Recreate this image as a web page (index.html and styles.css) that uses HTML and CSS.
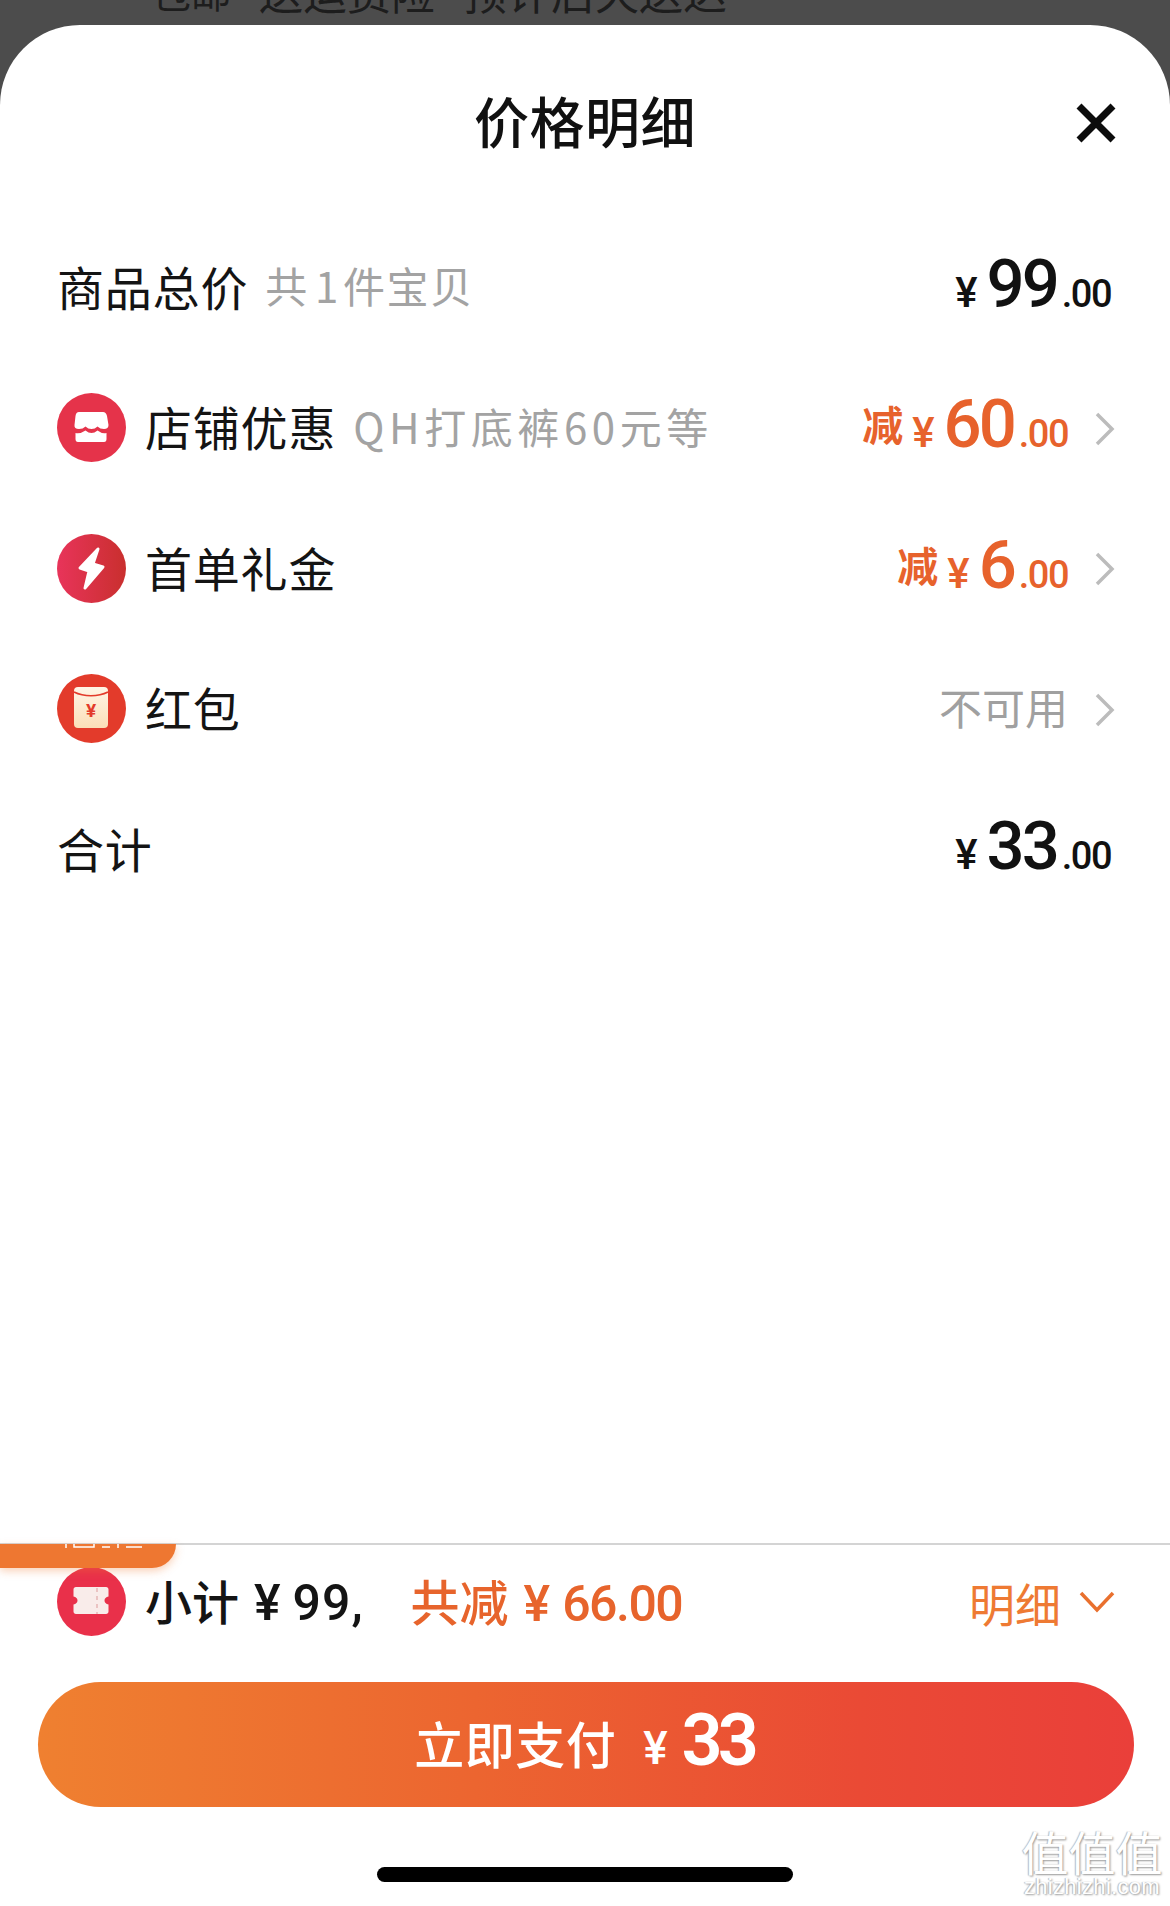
FILE: index.html
```html
<!DOCTYPE html>
<html lang="zh-CN">
<head>
<meta charset="utf-8">
<title>价格明细</title>
<link rel="stylesheet" href="styles.css">
</head>
<body>
<div class="page">
  <div class="behind"><span class="behind-text"><span class="behind-a">包邮</span><span>送运费险</span><span>预计后天送达</span></span></div>
  <main class="sheet">
    <header class="head">
      <span></span>
      <h1 class="title">价格明细</h1>
      <svg class="close" viewBox="0 0 40 40"><path d="M3 3 37 37M37 3 3 37"/></svg>
    </header>
    <section class="rows">
      <div class="row row-plain">
        <div class="left"><span class="label">商品总价</span><span class="sub sub-first">共<span class="num-gap">1</span>件宝贝</span></div>
        <div class="price"><span class="yen">¥</span><span class="big">99</span><span class="small">.00</span></div>
      </div>
      <div class="row">
        <div class="left">
          <svg class="icon" viewBox="0 0 69 69"><circle cx="34.5" cy="34.5" r="34.5" fill="#e5334a"/><path fill="#fff" d="M22 19H46Q49 19 50 23L51.500 32Q51.500 36 47 36 43 36 40.500 33.500 38 36 34.500 36 31 36 28.500 33.500 26 36 22 36 17 36 17.500 32L18.500 23Q19 19 22 19ZM18.500 40Q23.500 41 28.500 37.500 31.500 40 34.500 40 37.500 40 40.500 37.500 45 41 49.500 40V46Q49.500 49 47 49H21Q18.500 49 18.500 46Z"/></svg>
          <span class="label">店铺优惠</span><span class="sub sub-wide">QH打底裤60元等</span>
        </div>
        <div class="right">
          <div class="price off"><span class="minus">减</span><span class="yen">¥</span><span class="big">60</span><span class="small">.00</span></div>
          <svg class="chev" viewBox="0 0 20 34"><path d="M2 2 17 17 2 32"/></svg>
        </div>
      </div>
      <div class="row">
        <div class="left">
          <svg class="icon" viewBox="0 0 69 69"><defs><linearGradient id="bolt" x1="0" x2="1" y1="0" y2="0"><stop offset="0" stop-color="#e8345a"/><stop offset="1" stop-color="#c92f2e"/></linearGradient></defs><circle cx="34.500" cy="34.500" r="34.500" fill="url(#bolt)"/><path fill="#fff" stroke="#fff" stroke-width="3" stroke-linejoin="round" d="M41 15 23 34l9 3-4 17 18-21-10-3z"/></svg>
          <span class="label">首单礼金</span>
        </div>
        <div class="right">
          <div class="price off"><span class="minus">减</span><span class="yen">¥</span><span class="big">6</span><span class="small">.00</span></div>
          <svg class="chev" viewBox="0 0 20 34"><path d="M2 2 17 17 2 32"/></svg>
        </div>
      </div>
      <div class="row">
        <div class="left">
          <svg class="icon" viewBox="0 0 69 69"><defs><linearGradient id="pack" x1="0" x2="0" y1="0" y2="1"><stop offset="0" stop-color="#fff5e6"/><stop offset="1" stop-color="#fbdfb8"/></linearGradient></defs><circle cx="34.500" cy="34.500" r="34.500" fill="#e33b2b"/><rect x="17" y="13" width="34" height="41" rx="4" fill="url(#pack)"/><path d="M17 18c10 5 24 5 34 0" fill="none" stroke="#e33b2b" stroke-width="1.600"/><text class="pack-yen" x="34" y="43">¥</text></svg>
          <span class="label">红包</span>
        </div>
        <div class="right">
          <span class="none">不可用</span>
          <svg class="chev" viewBox="0 0 20 34"><path d="M2 2 17 17 2 32"/></svg>
        </div>
      </div>
      <div class="row row-plain">
        <div class="left"><span class="label">合计</span></div>
        <div class="price"><span class="yen">¥</span><span class="big">33</span><span class="small">.00</span></div>
      </div>
    </section>
    <footer class="foot">
      <div class="tab"><svg class="tab-marks" viewBox="0 0 80 5"><path d="M2 0V4M10 0V3H30V0M38 3H46M54 0V4M62 3H78"/></svg></div>
      <div class="summary">
        <div class="left">
          <svg class="icon" viewBox="0 0 69 69"><circle cx="34.500" cy="34.500" r="34.500" fill="#e9304a"/><path fill="#f9ecea" d="M19 20h30c1.500 0 2.500 1 2.500 2.500v7c-2.500.5-4 2-4 4s1.500 3.500 4 4v7c0 1.500-1 2.500-2.500 2.500H19c-1.500 0-2.500-1-2.500-2.500v-7c2.500-.5 4-2 4-4s-1.500-3.500-4-4v-7c0-1.500 1-2.500 2.500-2.500z"/><path d="M40 21V47" stroke="#e8b9b9" stroke-width="1.600" stroke-dasharray="4 4"/></svg>
          <span class="total">小计<span class="total-yen">¥</span><span class="total-num">99,</span></span>
          <span class="saved">共减<span class="total-yen">¥</span><span class="saved-num">66.00</span></span>
        </div>
        <div class="detail">明细<svg class="down" viewBox="0 0 36 24"><path d="M2 3 18 20 34 3"/></svg></div>
      </div>
      <button class="pay"><span class="pay-label">立即支付</span><span class="pay-yen">¥</span><span class="pay-num">33</span></button>
      <div class="home"></div>
    </footer>
  </main>
  <div class="mark"><span class="mark-cn">值值值</span><span class="mark-en">zhizhizhi.com</span></div>
</div>
</body>
</html>
```

FILE: styles.css
```css
* { box-sizing: border-box; }
html, body { margin: 0; padding: 0; }
body { font-family: "Noto Sans CJK SC", "Noto Sans", sans-serif; color: #111; }
.page { position: relative; width: 1170px; height: 1906px; overflow: hidden; background: #4c4c4c; display: flex; flex-direction: column; }

.behind { height: 25px; flex: none; overflow: hidden; padding-left: 151px; }
.behind-text { display: flex; gap: 28px; margin-top: -39px; font-size: 44px; line-height: 60px; color: #1d1d1d; }
.behind-a { font-size: 40px; }

.sheet { flex: 1; display: flex; flex-direction: column; background: #fff; border-radius: 80px 80px 0 0; }

.head { height: 192px; flex: none; display: grid; grid-template-columns: 1fr auto 1fr; align-items: center; padding: 0 54px; }
.title { margin: 0; margin-bottom: 4px; font-size: 55px; font-weight: 500; line-height: 1; letter-spacing: .5px; color: #111; }
.close { width: 40px; height: 40px; justify-self: end; margin-top: 3px; }
.close path { fill: none; stroke: #0c0c0c; stroke-width: 7; }

.row { height: 140.500px; display: flex; align-items: center; justify-content: space-between; padding: 0 55px 0 57px; }
.row-plain .price { padding-right: 4px; }
.left { display: flex; align-items: center; }
.icon { width: 69px; height: 69px; flex: none; margin-right: 19px; }
.label { margin-bottom: 4px; font-size: 47px; line-height: 1; letter-spacing: .8px; color: #141414; }
.row-plain .label { margin-left: 0; }
.sub { margin-bottom: 4px; margin-left: 20px; font-size: 42px; line-height: 1; color: #a3a3a3; letter-spacing: 1.700px; }
.sub-first { margin-left: 17px; }
.sub-wide { letter-spacing: 4.600px; margin-left: 17px; white-space: nowrap; }
.num-gap { margin: 0 3px 0 6px; }

.right { display: flex; align-items: center; gap: 27px; }
.chev { width: 20px; height: 34px; flex: none; margin-top: 2px; }
.chev path { fill: none; stroke: #bcbcbc; stroke-width: 3.500; }
.none { margin-bottom: 4px; font-size: 43px; line-height: 1; color: #a0a0a0; }

.price { display: flex; align-items: baseline; margin-bottom: 6px; font-family: Roboto, sans-serif; color: #111; }
.off { color: #e7622c; }
.minus { font-family: "Noto Sans CJK SC", sans-serif; font-size: 41px; font-weight: 700; line-height: 1; margin-right: 9px; transform: translateY(-6px); }
.yen { font-size: 42px; font-weight: 500; margin-right: 9px; }
.big { font-size: 67px; font-weight: 500; line-height: 1; letter-spacing: -3px; }
.small { font-size: 38px; font-weight: 500; margin-left: 5px; letter-spacing: -1.500px; }

.foot { position: relative; margin-top: auto; border-top: 2px solid #d4d4d4; }
.tab { position: absolute; left: 0; top: -1px; width: 176px; height: 24px; background: #ee7731; border-radius: 0 0 30px 0; box-shadow: 0 3px 8px rgba(238, 119, 49, .35); }
.tab-marks { display: block; width: 80px; height: 5px; margin-left: 64px; }
.tab-marks path { fill: none; stroke: #fff; stroke-width: 1.500; }

.summary { display: flex; align-items: center; justify-content: space-between; padding: 22px 55px 0 57px; }
.total { display: flex; align-items: baseline; font-size: 47px; font-weight: 500; line-height: 1; color: #141414; }
.total-yen { margin: 0 12px 0 15px; font-family: Roboto, sans-serif; font-size: 50px; font-weight: 500; }
.total-num { font-family: Roboto, sans-serif; font-size: 50px; font-weight: 500; letter-spacing: 1px; }
.saved { display: flex; align-items: baseline; margin-left: 47px; font-size: 49px; font-weight: 500; line-height: 1; color: #e7642c; }
.saved-num { font-family: Roboto, sans-serif; font-size: 50px; font-weight: 500; letter-spacing: -1.500px; }
.detail { display: flex; align-items: center; gap: 18px; font-size: 46px; line-height: 1; color: #ee7a33; }
.down { width: 36px; height: 24px; }
.down path { fill: none; stroke: #e9702e; stroke-width: 3.500; }

.pay { display: flex; align-items: center; justify-content: center; width: 1096px; height: 125px; margin: 46px 0 0 38px; padding: 0; border: 0; border-radius: 63px; background: linear-gradient(90deg, #ef8030 0%, #ec6530 40%, #ea4a35 75%, #ea3f3a 100%); color: #fff; font-family: "Noto Sans CJK SC", sans-serif; }
.pay-label { margin-bottom: 5px; font-size: 50px; font-weight: 500; line-height: 1; letter-spacing: .5px; }
.pay-yen { margin: 6px 14px 0 27px; font-family: Roboto, sans-serif; font-size: 46px; font-weight: 500; line-height: 1; }
.pay-num { margin-top: -8px; margin-right: 4px; font-family: Roboto, sans-serif; font-size: 72px; font-weight: 600; line-height: 1; letter-spacing: -5px; }

.home { width: 416px; height: 15px; margin: 60px 0 24px 377px; background: #000; border-radius: 8px; }

.mark { position: absolute; right: 6px; bottom: 8px; width: 144px; display: flex; flex-direction: column; align-items: center; color: #fff; text-shadow: 1px 1px 2px #999, -1px 0 1px #bbb; }
.mark-cn { font-size: 47px; line-height: 50px; white-space: nowrap; }
.mark-en { font-family: "Liberation Sans", sans-serif; font-size: 22px; line-height: 22px; letter-spacing: .3px; }
.pack-yen { font-family: Roboto, sans-serif; font-size: 19px; font-weight: 700; fill: #e33b2b; text-anchor: middle; }
```
